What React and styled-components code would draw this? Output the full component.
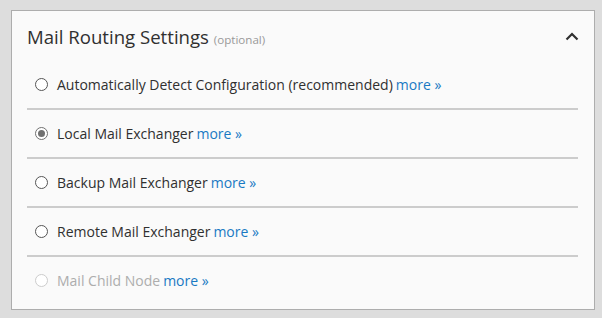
import React, { useState } from "react"
import styled, { createGlobalStyle } from "styled-components"

const GlobalStyle = createGlobalStyle`
  html, body {
    margin: 0;
    padding: 0;
    background: #dddddd;
  }
  body {
    font-family: "Open Sans", "Liberation Sans", sans-serif;
    color: #303030;
  }
`

const Page = styled.div`
  padding: 10px 7px 8px 11px;
`

const Panel = styled.section`
  background: #fafafa;
  border: 1px solid #adadad;
  padding: 0 16px 5px 15px;
`

const Header = styled.div`
  display: flex;
  align-items: center;
  justify-content: space-between;
  height: 50px;
`

const Title = styled.h2`
  margin: 0;
  font-size: 18.6px;
  font-weight: 400;
  color: #303030;
`

const Optional = styled.span`
  font-size: 11.6px;
  color: #999999;
`

const Toggle = styled.button`
  border: 0;
  background: none;
  padding: 0;
  margin-right: -1px;
  display: flex;
  cursor: pointer;
`

const List = styled.div`
  display: flex;
  flex-direction: column;
`

const Row = styled.label`
  display: flex;
  align-items: center;
  gap: 9px;
  height: 47px;
  padding-left: 8px;
  border-bottom: 2px solid #cccccc;
  font-size: 14px;
  color: ${({ disabled }) => (disabled ? "#adadad" : "#303030")};
  cursor: ${({ disabled }) => (disabled ? "default" : "pointer")};

  &:last-child {
    border-bottom: 0;
  }
`

const Radio = styled.input`
  appearance: none;
  margin: 0;
  width: 13px;
  height: 13px;
  border-radius: 50%;
  border: 1px solid #555555;
  background: #ffffff;
  display: grid;
  place-items: center;
  flex-shrink: 0;

  &::after {
    content: "";
    width: 7px;
    height: 7px;
    border-radius: 50%;
    background: transparent;
  }
  &:checked {
    border-color: #707070;
  }
  &:checked::after {
    background: #707070;
  }
  &:disabled {
    border-color: #cccccc;
  }
`

const More = styled.a`
  color: #1979c3;
  text-decoration: none;
  margin-left: 3px;
`

const options = [
  { id: "auto", label: "Automatically Detect Configuration (recommended)" },
  { id: "local", label: "Local Mail Exchanger" },
  { id: "backup", label: "Backup Mail Exchanger" },
  { id: "remote", label: "Remote Mail Exchanger" },
  { id: "child", label: "Mail Child Node", disabled: true },
]

const Chevron = () => (
  <svg width="14" height="9" viewBox="0 0 14 9">
    <path d="M1.5 7.5 L7 2 L12.5 7.5" fill="none" stroke="#303030" strokeWidth="2.2" />
  </svg>
)

const App = () => {
  const [value, setValue] = useState("local")

  return (
    <>
      <GlobalStyle />
      <Page>
        <Panel>
          <Header>
            <Title>
              Mail Routing Settings <Optional>(optional)</Optional>
            </Title>
            <Toggle aria-label="Collapse">
              <Chevron />
            </Toggle>
          </Header>
          <List>
            {options.map((o) => (
              <Row key={o.id} disabled={o.disabled}>
                <Radio
                  type="radio"
                  name="routing"
                  checked={value === o.id}
                  disabled={o.disabled}
                  onChange={() => setValue(o.id)}
                />
                <span>
                  {o.label}
                  <More href="#">more »</More>
                </span>
              </Row>
            ))}
          </List>
        </Panel>
      </Page>
    </>
  )
}

export default App
